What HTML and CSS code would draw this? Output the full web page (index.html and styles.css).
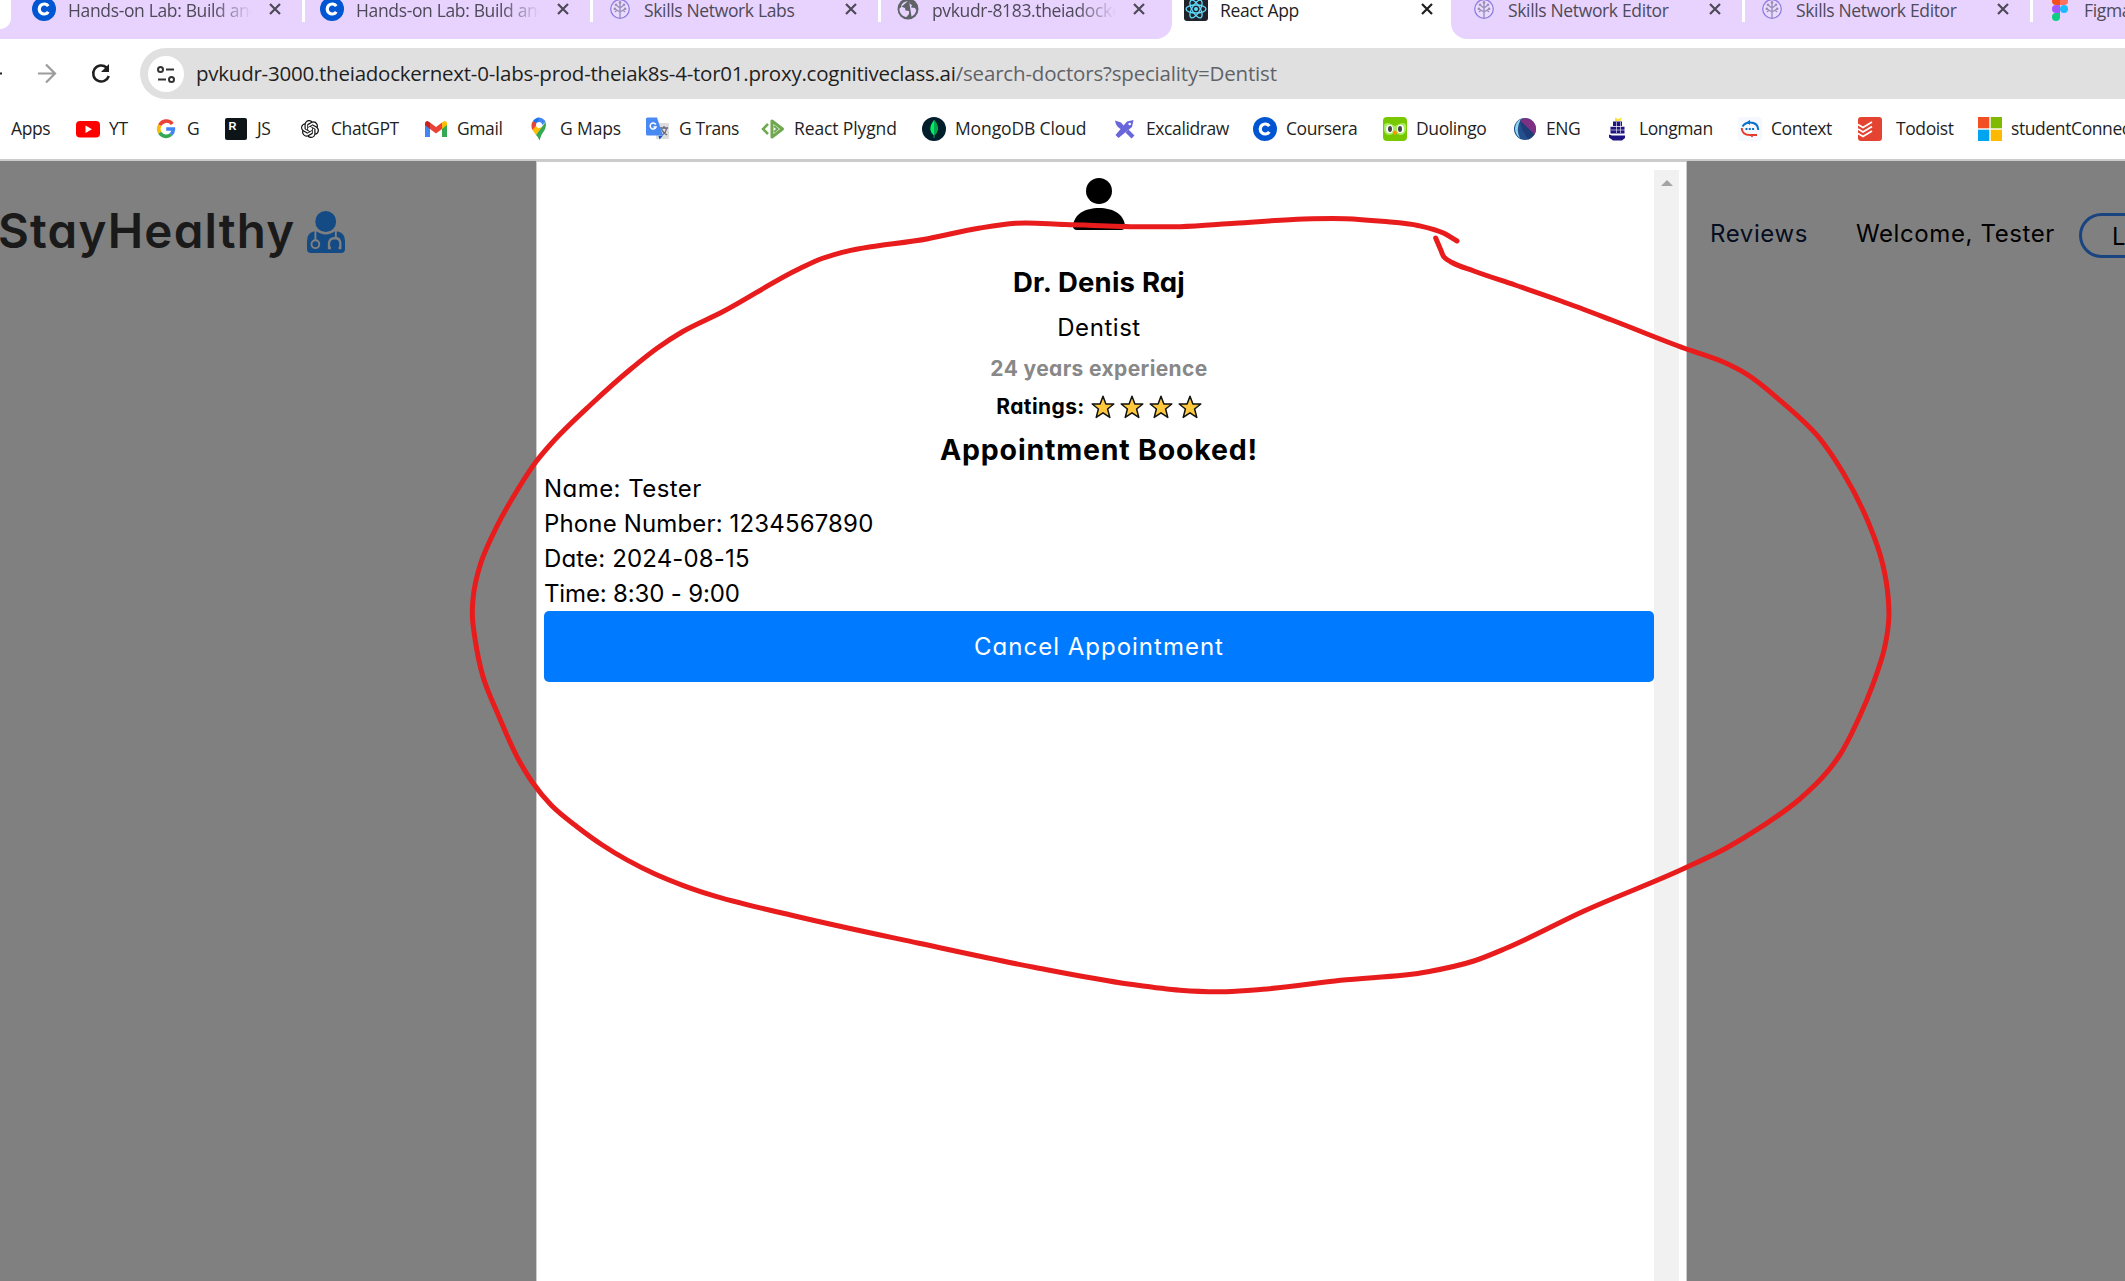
FILE: index.html
```html
<!DOCTYPE html>
<html lang="en">
<head>
<meta charset="utf-8">
<title>React App</title>
<link rel="stylesheet" href="styles.css">
</head>
<body>
<svg class="defs" aria-hidden="true">
  <symbol id="coursera" viewBox="0 0 24 24"><circle cx="12" cy="12" r="12" fill="#0056d2"/><path d="M16.3 9.1A5 5 0 1 0 16.3 14.9" fill="none" stroke="#fff" stroke-width="3.2"/></symbol>
  <symbol id="skills" viewBox="0 0 24 24"><circle cx="12" cy="12" r="12" fill="#e2d6fb"/><circle cx="12" cy="12" r="9.3" fill="#e9dcff" stroke="#9a7be6" stroke-width="1.3"/><path d="M12 22V6M12 15L7 12M12 15L17 12M12 11L8 8M12 11L16 8M7 15L9 13M17 15L15 13" stroke="#9b8fb8" stroke-width="1.4" fill="none"/><g fill="#9b8fb8"><circle cx="12" cy="5.5" r="1.4"/><circle cx="8" cy="7.7" r="1.3"/><circle cx="16" cy="7.7" r="1.3"/><circle cx="6.8" cy="11.8" r="1.3"/><circle cx="17.2" cy="11.8" r="1.3"/></g></symbol>
  <symbol id="close" viewBox="0 0 12 12"><path d="M1 1L11 11M11 1L1 11" fill="none" stroke="currentColor" stroke-width="2.2"/></symbol>
  <symbol id="star" viewBox="0 0 24 24"><path d="M12 1.2L14.9 9H22.8L16.6 14L18.8 22.4L12 17.8L5.2 22.4L7.4 14L1.2 9H9.1Z" fill="#ffc83d" stroke="#111" stroke-width="1.5" stroke-linejoin="round"/></symbol>
</svg>

<header class="browser">
  <div class="tabs">
    <div class="tab-search"><span></span></div>
    <div class="tab"><svg class="ico"><use href="#coursera"/></svg><span class="label fade">Hands-on Lab: Build and</span><svg class="x"><use href="#close"/></svg></div>
    <div class="tab"><svg class="ico"><use href="#coursera"/></svg><span class="label fade">Hands-on Lab: Build and</span><svg class="x"><use href="#close"/></svg></div>
    <div class="tab"><svg class="ico"><use href="#skills"/></svg><span class="label">Skills Network Labs</span><svg class="x"><use href="#close"/></svg></div>
    <div class="tab last"><svg class="ico" viewBox="0 0 24 24"><circle cx="12" cy="12" r="10.500" fill="#5f6368"/><path d="M12 4C8 4.500 5.500 6.500 5 9.500L9 11L9.500 13.500L13 14V17L10.500 20C6 19.500 3 15.500 3.500 11.500M13 4V6.500L16 8L15 10.500L19 11L20.300 13.500C19.500 16.500 18 18.500 15.500 19.500" fill="#e8d3ff"/></svg><span class="label fade">pvkudr-8183.theiadocker</span><svg class="x"><use href="#close"/></svg></div>
    <div class="tab active"><svg class="ico" viewBox="0 0 24 24"><rect width="24" height="24" rx="3" fill="#20232a"/><g fill="none" stroke="#61dafb" stroke-width="1.300"><ellipse cx="12" cy="12" rx="10" ry="4"/><ellipse cx="12" cy="12" rx="10" ry="4" transform="rotate(60 12 12)"/><ellipse cx="12" cy="12" rx="10" ry="4" transform="rotate(120 12 12)"/></g><circle cx="12" cy="12" r="2" fill="#61dafb"/></svg><span class="label">React App</span><svg class="x"><use href="#close"/></svg></div>
    <div class="tab first"><svg class="ico"><use href="#skills"/></svg><span class="label">Skills Network Editor</span><svg class="x"><use href="#close"/></svg></div>
    <div class="tab"><svg class="ico"><use href="#skills"/></svg><span class="label">Skills Network Editor</span><svg class="x"><use href="#close"/></svg></div>
    <div class="tab"><svg class="ico" viewBox="0 0 24 24"><path d="M12 0H8a4 4 0 0 0 0 8h4z" fill="#f24e1e"/><path d="M12 0h4a4 4 0 0 1 0 8h-4z" fill="#ff7262"/><path d="M12 8H8a4 4 0 0 0 0 8h4z" fill="#a259ff"/><circle cx="16" cy="12" r="4" fill="#1abcfe"/><path d="M12 16H8a4 4 0 1 0 4 4z" fill="#0acf83"/></svg><span class="label">Figma</span></div>
  </div>

  <div class="toolbar">
    <svg class="nav" viewBox="0 0 140 51"><path d="M0 25.500H2" stroke="#1f1f1f" stroke-width="2.200"/><path d="M38 25.500H55M46 16.500L55 25.500L46 34.500" fill="none" stroke="#9c9c9c" stroke-width="2.200"/><path d="M106.500 19.500A8 8 0 1 0 108.800 28" fill="none" stroke="#1f1f1f" stroke-width="2.500"/><path d="M109 16V24H101Z" fill="#1f1f1f"/></svg>
    <div class="omnibox">
      <span class="site-info"><svg viewBox="0 0 20 20"><g fill="none" stroke="#333" stroke-width="2"><circle cx="4.500" cy="5.500" r="2.500"/><path d="M10 5.500H18M2 15.500H10"/><circle cx="15.500" cy="15.500" r="2.500"/></g></svg></span>
      <span class="url"><span class="host">pvkudr-3000.theiadockernext-0-labs-prod-theiak8s-4-tor01.proxy.cognitiveclass.ai</span><span class="path">/search-doctors?speciality=Dentist</span></span>
    </div>
  </div>

  <nav class="bookmarks">
    <a class="apps">Apps</a>
    <a><svg viewBox="0 0 24 24"><rect y="4" width="24" height="16.500" rx="4" fill="#f00"/><path d="M9.500 8.500V16L16 12.200Z" fill="#fff"/></svg>YT</a>
    <a><svg viewBox="0 0 24 24"><g fill="none" stroke-width="3.600"><path d="M18.300 7A7.400 7.400 0 0 0 5.700 8.300" stroke="#ea4335"/><path d="M5.700 8.300A7.400 7.400 0 0 0 5.700 15.700" stroke="#fbbc05"/><path d="M5.700 15.700A7.400 7.400 0 0 0 17 17.500" stroke="#34a853"/><path d="M17 17.500A7.400 7.400 0 0 0 19.400 12H12.200" stroke="#4285f4"/></g></svg>G</a>
    <a><svg viewBox="0 0 24 24"><rect x="1" y="1" width="22" height="22" rx="2" fill="#0e1518"/><text x="4.500" y="13" class="r-mark">R</text></svg>JS</a>
    <a><svg viewBox="-4 -4 32 32"><path fill="#111" d="M22.2819 9.8211a5.9847 5.9847 0 0 0-.5157-4.9108 6.0462 6.0462 0 0 0-6.5098-2.9A6.0651 6.0651 0 0 0 4.9807 4.1818a5.9847 5.9847 0 0 0-3.9977 2.9 6.0462 6.0462 0 0 0 .7427 7.0966 5.98 5.98 0 0 0 .511 4.9107 6.051 6.051 0 0 0 6.5146 2.9001A5.9847 5.9847 0 0 0 13.2599 24a6.0557 6.0557 0 0 0 5.7718-4.2058 5.9894 5.9894 0 0 0 3.9977-2.9001 6.0557 6.0557 0 0 0-.7475-7.0729zm-9.022 12.6081a4.4755 4.4755 0 0 1-2.8764-1.0408l.1419-.0804 4.7783-2.7582a.7948.7948 0 0 0 .3927-.6813v-6.7369l2.02 1.1686a.071.071 0 0 1 .038.052v5.5826a4.504 4.504 0 0 1-4.4945 4.4944zm-9.6607-4.1254a4.4708 4.4708 0 0 1-.5346-3.0137l.142.0852 4.783 2.7582a.7712.7712 0 0 0 .7806 0l5.8428-3.3685v2.3324a.0804.0804 0 0 1-.0332.0615L9.74 19.9502a4.4992 4.4992 0 0 1-6.1408-1.6464zM2.3408 7.8956a4.485 4.485 0 0 1 2.3655-1.9728V11.6a.7664.7664 0 0 0 .3879.6765l5.8144 3.3543-2.0201 1.1685a.0757.0757 0 0 1-.071 0l-4.8303-2.7865A4.504 4.504 0 0 1 2.3408 7.872zm16.5963 3.8558L13.1038 8.364 15.1192 7.2a.0757.0757 0 0 1 .071 0l4.8303 2.7913a4.4944 4.4944 0 0 1-.6765 8.1042v-5.6772a.79.79 0 0 0-.407-.667zm2.0107-3.0231l-.142-.0852-4.7735-2.7818a.7759.7759 0 0 0-.7854 0L9.409 9.2297V6.8974a.0662.0662 0 0 1 .0284-.0615l4.8303-2.7866a4.4992 4.4992 0 0 1 6.6802 4.66zM8.3065 12.863l-2.02-1.1638a.0804.0804 0 0 1-.038-.0567V6.0742a4.4992 4.4992 0 0 1 7.3757-3.4537l-.142.0805L8.704 5.459a.7948.7948 0 0 0-.3927.6813zm1.0976-2.3654l2.602-1.4998 2.6069 1.4998v2.9994l-2.5974 1.4997-2.6067-1.4997Z"/></svg>ChatGPT</a>
    <a><svg viewBox="0 0 24 24"><path d="M1 7L6 10V20H1Z" fill="#4285f4"/><path d="M23 7L18 10V20H23Z" fill="#34a853"/><path d="M18 5.500L20.500 4Q23 4 23 7V8L18 12Z" fill="#fbbc04"/><path d="M6 5.500L3.500 4Q1 4 1 7V8L6 12Z" fill="#c5221f"/><path d="M6 5.500L12 10L18 5.500V12L12 16.500L6 12Z" fill="#ea4335"/></svg>Gmail</a>
    <a class="loose"><svg viewBox="0 0 24 24"><path d="M6 4Q8.500 .5 12 .5L14 7L8 11Z" fill="#1a73e8"/><path d="M12 .5Q17 1 18.500 5L13 10L11 6Z" fill="#4285f4"/><path d="M6 4Q3 8 5.500 13L11.500 8Z" fill="#ea4335"/><path d="M5.500 13L9 18L15 10L10 7.500Z" fill="#fbbc04"/><path d="M18.500 5Q20 9 17 14Q13.500 18 12.500 23.500Q11.500 20 9 18Z" fill="#34a853"/><circle cx="12" cy="8" r="3" fill="#fff"/></svg>G Maps</a>
    <a><svg viewBox="0 0 24 24"><rect x="10" y="6" width="13" height="16" rx="1" fill="#ddd"/><path d="M14 11H22M18 9V11M16 18Q20 16 20.500 11M15.500 12Q17 16 21 18" fill="none" stroke="#667" stroke-width="1.300"/><path d="M12.500 19L17 18.500L13.500 22.500Z" fill="#1c51bd"/><path d="M1.500 .5H11L17 18.500H1.500Q0 18.500 0 17V2Q0 .5 1.500 .5Z" fill="#4889f4"/><path d="M9.800 7.600A3 3 0 1 0 10 10H7.500" fill="none" stroke="#fff" stroke-width="1.500"/></svg>G Trans</a>
    <a class="loose"><svg viewBox="0 0 24 24"><path d="M7 7L2 12L7 17" fill="none" stroke="#6fa84f" stroke-width="2.500"/><path d="M11 4V20L21.500 12Z" fill="none" stroke="#6fa84f" stroke-width="3" stroke-linejoin="round"/><path d="M13 9L16.500 12L13 15" fill="none" stroke="#6fa84f" stroke-width="2"/></svg>React Plygnd</a>
    <a class="loose"><svg viewBox="0 0 24 24"><circle cx="12" cy="12" r="12" fill="#001e2b"/><path d="M12 3Q16.500 8 15.700 13Q15 16.500 12.400 18.300V21H11.700V18.300Q8.800 16 8.300 12.500Q8 8 12 3Z" fill="#00ed64"/><path d="M12 3Q16.500 8 15.700 13Q15 16.500 12.400 18.300L12 18Z" fill="#00a84b"/></svg>MongoDB Cloud</a>
    <a><svg viewBox="0 0 24 24"><path d="M20.500 3L14 4.500L2.500 18L5.500 21L19 10Z" fill="#6965db"/><circle cx="16.700" cy="7" r="1.300" fill="#fff"/><path d="M2 3.500L8 5.500L11.500 9.500L8.500 12.500Q3 10 2 3.500ZM12.500 15.500L15.500 12.500L21.500 18.500L18.500 21.500Z" fill="#6965db"/></svg>Excalidraw</a>
    <a><svg><use href="#coursera"/></svg>Coursera</a>
    <a><svg viewBox="0 0 24 24"><rect width="24" height="24" rx="4" fill="#78c800"/><path d="M1 8Q2 5 7 6.500L12 9L17 6.500Q22 5 23 8V13Q22 18 17.500 18Q14 18 12 14Q10 18 6.500 18Q2 18 1 13Z" fill="#a5ed5a"/><ellipse cx="6.500" cy="12" rx="3.500" ry="4.300" fill="#fff"/><ellipse cx="17.500" cy="12" rx="3.500" ry="4.300" fill="#fff"/><ellipse cx="7" cy="12" rx="2" ry="3" fill="#444"/><ellipse cx="17" cy="12" rx="2" ry="3" fill="#444"/><path d="M9.500 15L12 13.500L14.500 15L12 18.500Z" fill="#ff9600"/></svg>Duolingo</a>
    <a><svg viewBox="0 0 24 24"><circle cx="12" cy="12" r="11" fill="#234f8c"/><path d="M8 2A11 11 0 0 0 7 21Q2 12 8 2Z" fill="#8ed4ef"/><path d="M7 3.500Q14 -1.500 20 4.500Q25 10 21.500 17.500Z" fill="#7e3183"/><path d="M7 3.500L9 12L15 22.500L21.500 17.500Z" fill="#1d3c78"/></svg>ENG</a>
    <a><svg viewBox="0 0 24 24"><path d="M9 .5L12 2L16 .5L14.500 4H9Z" fill="#fae13c"/><path d="M7 4.500H16V9H7ZM4.500 9.800H18.500V16.500H4.500ZM3 17.500L6 18.500H19V21L16 23.500H7L3 20.500Z" fill="#1d1480"/><path d="M10.500 5V16M14.500 5V16M5 13H19" stroke="#fff" stroke-width=".6"/></svg>Longman</a>
    <a><svg viewBox="0 0 24 24"><rect width="24" height="24" rx="3" fill="#f5f9ff"/><path d="M4.500 9.500Q7 5.500 12 5.500Q20 5.500 20.300 13" fill="none" stroke="#0970ca" stroke-width="2"/><path d="M12 2.800V8L8.500 5.500Z" fill="#0970ca"/><path d="M3.700 11Q4 18 12 18H19" fill="none" stroke="#e73b29" stroke-width="2"/><path d="M11 17H17L14 20.500Z" fill="#e73b29"/><path d="M7.500 12H16.500" stroke="#0970ca" stroke-width="2" stroke-dasharray="2 1.300"/></svg>Context</a>
    <a class="wide"><svg viewBox="0 0 24 24"><rect width="24" height="24" rx="3" fill="#e44332"/><path d="M0 7.500L5 10.500L14 5M0 12L5 15L14 9.500M0 16.500L5 19.500L14 14" fill="none" stroke="#fff" stroke-width="1.800"/></svg>Todoist</a>
    <a><svg viewBox="0 0 24 24"><path fill="#f25022" d="M0 0h11.300v11.300H0z"/><path fill="#7fba00" d="M12.700 0H24v11.300H12.700z"/><path fill="#00a4ef" d="M0 12.700h11.300V24H0z"/><path fill="#ffb900" d="M12.700 12.700H24V24H12.700z"/></svg>studentConnect</a>
  </nav>
</header>

<main class="page">
  <div class="site-nav left">
    <span class="brand">StayHealthy</span>
    <svg class="doctor" viewBox="0 0 38 42"><path d="M6.500 20.500H31Q38 22 38 30V38Q38 42 34 42H4Q0 42 0 38V30Q0 22 6.500 20.500Z" fill="#144b84"/><circle cx="18.700" cy="10.500" r="11.700" fill="#144b84" stroke="#808080" stroke-width="2.500"/><g fill="none" stroke="#808080" stroke-width="1.900"><path d="M8.400 20V29.500M28.800 20V26.500"/><circle cx="8.400" cy="33.200" r="3.900"/><path d="M24 37H22V32Q22.500 27 28.500 27Q33 27.500 33.300 32V37H31.500" stroke-width="2.300"/></g></svg>
  </div>

  <section class="modal">
    <div class="modal-body">
      <svg class="avatar" viewBox="0 0 52 52"><circle cx="26" cy="13" r="13" fill="#000"/><path d="M0 48C1 36 12 30 26 30S51 36 52 48Q52 52 48 52H4Q0 52 0 48Z" fill="#000"/></svg>
      <h2 class="doctor-name">Dr. Denis Raj</h2>
      <p class="speciality">Dentist</p>
      <p class="experience">24 years experience</p>
      <p class="ratings"><span>Ratings:</span><span class="stars"><svg><use href="#star"/></svg><svg><use href="#star"/></svg><svg><use href="#star"/></svg><svg><use href="#star"/></svg></span></p>
      <h3 class="booked">Appointment Booked!</h3>
      <div class="details">
        <p class="d-name">Name: Tester</p>
        <p class="d-phone">Phone Number: 1234567890</p>
        <p class="d-date">Date: 2024-08-15</p>
        <p class="d-time">Time: 8:30 - 9:00</p>
      </div>
      <button class="cancel">Cancel Appointment</button>
    </div>
    <div class="scrollbar"><svg viewBox="0 0 12 6"><path d="M0 6L6 0L12 6Z" fill="#a3a3a3"/></svg></div>
  </section>

  <div class="site-nav right">
    <a class="reviews">Reviews</a>
    <span class="welcome">Welcome, Tester</span>
    <a class="logout">Logout</a>
  </div>
</main>

<svg class="marker" viewBox="0 0 2125 1281"><path id="stroke"/></svg>
<script src="marker.js"></script>
</body>
</html>
```
FILE: styles.css
```css
* { box-sizing: border-box; margin: 0; padding: 0; }
body { width: 2125px; height: 1281px; overflow: hidden; display: flex; flex-direction: column; background: #808080; }
.defs { position: absolute; width: 0; height: 0; }

/* browser chrome */
.browser { height: 161px; flex: none; background: #fff; border-bottom: 2px solid #ccc; font-family: "Open Sans", "Noto Sans", sans-serif; overflow: hidden; }
.tabs { display: flex; height: 39px; background: #fff; overflow: hidden; }
.tab-search { flex: none; width: 16px; background: #e8d3ff; }
.tab-search span { display: block; width: 11px; height: 29px; background: #fff; border-bottom-right-radius: 11px; }
.tab { flex: none; position: relative; display: flex; width: 288px; padding-left: 16px; background: #e8d3ff; color: #4e4a58; }
.tab:not(.last):not(.active)::after { content: ""; position: absolute; right: -1px; top: 0; width: 3px; height: 22px; background: #fff; z-index: 1; }
.tab.last { width: 292px; border-bottom-right-radius: 16px; }
.tab.active { width: 279px; margin-left: 0; padding-left: 12px; background: #fff; color: #1f1f1f; }
.tab.first { width: 293px; padding-left: 21px; border-bottom-left-radius: 16px; }
.ico { flex: none; width: 24px; height: 24px; margin-top: -3px; }
.label { width: 184px; margin-left: 12px; margin-right: 17px; font-size: 17.500px; line-height: 24px; margin-top: -2px; white-space: nowrap; overflow: hidden; letter-spacing: -.35px; }
.fade { -webkit-mask-image: linear-gradient(90deg, #000 145px, transparent 184px); mask-image: linear-gradient(90deg, #000 145px, transparent 184px); }
.x { flex: none; width: 12px; height: 12px; margin-top: 3px; }

.toolbar { display: flex; height: 60px; padding-top: 9px; overflow: hidden; }
.nav { flex: none; width: 140px; height: 51px; }
.omnibox { flex: none; display: flex; align-items: center; width: 2040px; height: 51px; padding-left: 8px; border-radius: 26px; background: #e0e0e0; }
.site-info { display: grid; place-items: center; width: 36px; height: 36px; border-radius: 50%; background: #fff; }
.site-info svg { width: 20px; height: 20px; }
.url { margin-left: 12px; margin-bottom: 2px; font-size: 20.500px; line-height: 30px; white-space: nowrap; color: #5f6368; }
.host { color: #1f1f1f; letter-spacing: -.24px; }
.path { letter-spacing: -.18px; }

.bookmarks { display: grid; grid-template-columns: 65px 78px 70px 74px 126px 103px 119px 115px 161px 191px 140px 130px 130px 93px 132px 120px 120px 170px; height: 60px; padding: 18px 0 0 11px; }
.bookmarks a { display: flex; align-items: flex-start; height: 24px; font-size: 17.500px; line-height: 22.500px; color: #1f1f1f; white-space: nowrap; letter-spacing: -.4px; }
.bookmarks .loose { letter-spacing: -.12px; }
.bookmarks svg { flex: none; width: 24px; height: 24px; margin-right: 9px; }
.bookmarks .wide svg { margin-right: 14px; }
.r-mark { font: bold 11px "Liberation Sans", sans-serif; fill: #fff; letter-spacing: 0; }

/* application page */
.page { flex: 1; display: grid; grid-template-columns: 536px 1151px 438px; font-family: Inter, sans-serif; font-feature-settings: "cv11"; }
.site-nav { display: flex; align-items: flex-start; overflow: hidden; white-space: nowrap; }
.brand { width: 307px; margin-left: -2px; margin-top: 35px; font-size: 47.500px; font-weight: 600; line-height: 70px; color: #1a1a1a; letter-spacing: 1.200px; }
.doctor { flex: none; width: 38px; height: 42px; margin-top: 50px; margin-left: 2px; overflow: visible; }
.reviews, .welcome { flex: none; margin-top: 55px; font-size: 24px; line-height: 35px; color: #000; letter-spacing: .6px; }
.reviews { width: 146px; margin-left: 23px; color: #050e20; }
.welcome { width: 223px; }
.logout { flex: none; margin-top: 52px; width: 130px; height: 45px; padding-left: 30px; border: 3px solid #1a4480; border-radius: 23px; font-size: 24px; line-height: 42px; color: #000; }

.modal { display: flex; padding: 8px 7px 0; background: #fff; border: 1px solid #ccc; border-bottom: 0; color: #000; }
.modal-body { width: 1110px; display: flex; flex-direction: column; align-items: center; }
.modal-body p, .modal-body h2, .modal-body h3 { white-space: nowrap; }
.avatar { width: 52px; height: 52px; margin: 8px 0 31px; flex: none; }
.doctor-name { height: 49px; font-size: 27.500px; line-height: 43px; font-weight: 700; letter-spacing: .2px; }
.speciality { height: 43px; font-size: 24px; line-height: 36px; letter-spacing: .55px; }
.experience { height: 38px; font-size: 21px; line-height: 31px; font-weight: 700; color: #888; letter-spacing: .37px; }
.ratings { display: flex; height: 38px; font-size: 21px; line-height: 31px; font-weight: 700; letter-spacing: .4px; }
.stars { display: flex; gap: 5px; margin: 4px 0 0 6px; }
.stars svg { width: 24px; height: 24px; }
.booked { height: 42px; font-size: 28.500px; line-height: 42px; font-weight: 700; letter-spacing: .8px; }
.details { align-self: stretch; font-size: 24px; line-height: 35px; }
.d-name { letter-spacing: .45px; }
.d-phone, .d-date { letter-spacing: .15px; }
.d-time { letter-spacing: -.15px; }
.cancel { align-self: stretch; height: 71px; border: 0; border-radius: 5px; background: #007bff; color: #fff; font: 24px/35px Inter, sans-serif; font-feature-settings: "cv11"; letter-spacing: 1px; }
.scrollbar { width: 25px; padding-top: 10px; background: #f1f1f1; display: flex; justify-content: center; align-items: flex-start; }
.scrollbar svg { width: 12px; height: 6px; }

/* freehand marker drawn over everything */
.marker { position: absolute; left: 0; top: 0; width: 2125px; height: 1281px; pointer-events: none; }
.marker path { fill: none; stroke: #e81c1c; stroke-width: 5; stroke-linecap: round; stroke-linejoin: round; }
```
FILE: marker.js
```js
// Smooths the marker's sample points into one curve.
const points = [
  [1457,241],[1444,233.3],[1418.8,225.7],[1382,221.3],[1345.3,218.7],[1304,219],[1235,223.3],[1180,226.7],[1139.5,226.7],
  [1065,224.5],[1015.6,223.3],[980,228],[928,238.7],[841,252.7],[822,258.500],[799.8,268.500],[721.7,312.3],[682,332],[657.4,348],[632,368],[590.9,404.500],
  [551.8,443],[535.8,462],[517.4,490],[496.7,526.7],[480.7,563.3],[472.9,600],[472.4,616.7],[475.2,640],[483,676.7],
  [499,716.7],[519.7,761.7],[532,781.7],[551.8,805.7],[577,826.7],[602.3,845],[655,874],[682.7,885.3],[710.2,894.7],
  [790.6,915],[919,943.3],[1034,967.3],[1130.3,984.3],[1180,990.3],[1226,991.7],[1262.6,989.3],[1340.7,980.3],[1428,971.7],
  [1473.8,961],[1506,948.3],[1584,911],[1685,868],[1726.4,848],[1758.5,828.7],[1799.8,799],[1827.4,771.7],[1839.8,755],
  [1858,720],[1873.3,683.3],[1884.8,646.7],[1888.9,616.7],[1888.4,600],[1882.5,563.3],[1868.7,523.3],[1843.4,473.3],
  [1818.2,436.7],[1781.5,401.7],[1747,374.3],[1724,362.3],[1685,348.500],[1611.6,320],[1561,301],[1515,285],[1473.8,271],
  [1452,262.5],[1444,257],[1440.8,250],[1435.7,238]
];

const unit = (p, q) => {
  const dx = q[0] - p[0], dy = q[1] - p[1], l = Math.hypot(dx, dy);
  return [dx / l, dy / l, l];
};

// the tangent at a sample leans towards its nearer neighbour
const tangents = points.map((p, i) => {
  if (i === 0) return unit(p, points[1]);
  if (i === points.length - 1) return unit(points[i - 1], p);
  const u = unit(points[i - 1], p), v = unit(p, points[i + 1]);
  return unit([0, 0], [u[0] * v[2] + v[0] * u[2], u[1] * v[2] + v[1] * u[2]]);
});

let d = `M${points[0]}`;
for (let i = 0; i < points.length - 1; i++) {
  const b = points[i], c = points[i + 1], s = tangents[i], e = tangents[i + 1];
  const h = unit(b, c)[2] / 3;
  d += `C${b[0] + s[0] * h},${b[1] + s[1] * h} ${c[0] - e[0] * h},${c[1] - e[1] * h} ${c[0]},${c[1]}`;
}
document.getElementById('stroke').setAttribute('d', d);
```
